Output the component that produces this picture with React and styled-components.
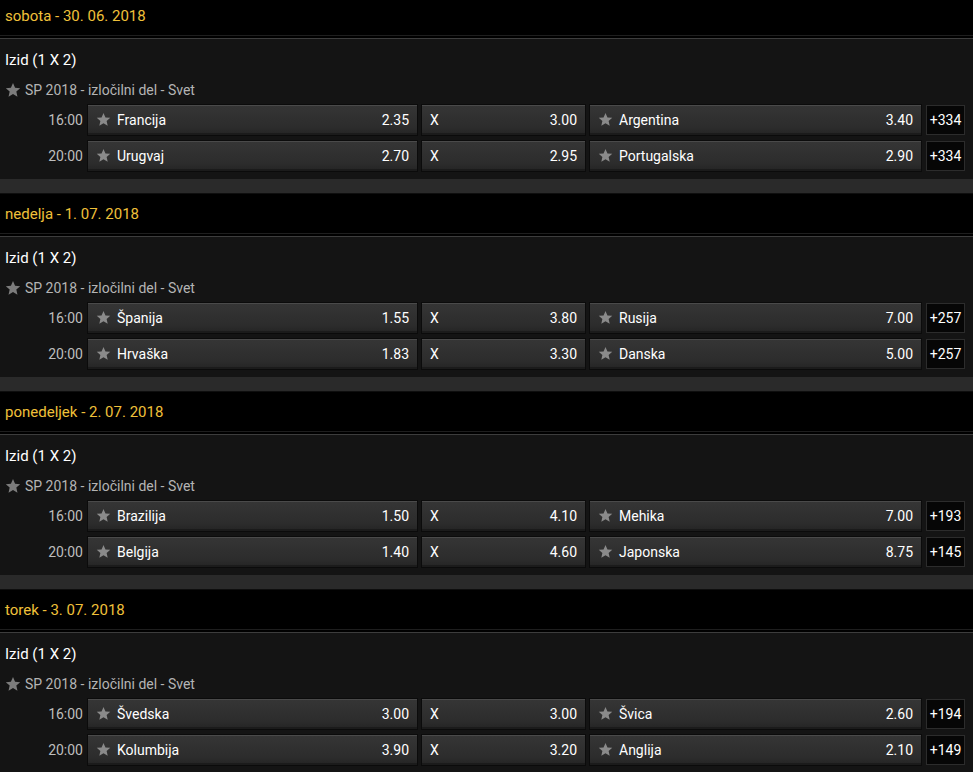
import React from 'react';
import styled, { createGlobalStyle } from 'styled-components';

const GlobalStyle = createGlobalStyle`
  html, body {
    margin: 0;
    padding: 0;
    background: #000;
    font-family: Roboto, "Liberation Sans", Arial, sans-serif;
    overflow: hidden;
  }
`;

const Page = styled.div`
  width: 973px;
  background: #000;
`;

const Section = styled.section`
  height: 198px;
  display: flex;
  flex-direction: column;
  background: #000;
`;

const DateHeader = styled.div`
  height: 35px;
  line-height: 33px;
  padding-left: 5px;
  color: #f0c03a;
  font-size: 15px;
  background: #000;
  border-bottom: 1px solid #1e1e1e;
  margin-bottom: 2px;
`;

const Body = styled.div`
  background: #141414;
  border-top: 1px solid #3d3d3d;
  padding: 11px 0 10px;
  display: flex;
  flex-direction: column;
`;

const MarketTitle = styled.div`
  height: 20px;
  line-height: 20px;
  padding-left: 5px;
  color: #fff;
  font-size: 15px;
  margin-bottom: 10px;
`;

const League = styled.div`
  height: 20px;
  line-height: 20px;
  padding-left: 5px;
  display: flex;
  align-items: center;
  gap: 4px;
  color: #b4b4b4;
  font-size: 14px;
  margin-bottom: 5px;
`;

const Rows = styled.div`
  display: flex;
  flex-direction: column;
  gap: 8px;
`;

const Row = styled.div`
  display: grid;
  grid-template-columns: 83px 329px 163px 331px 39px;
  column-gap: 5px;
  height: 28px;
`;

const Time = styled.div`
  color: #bdbdbd;
  font-size: 14px;
  text-align: right;
  line-height: 30px;
`;

const Outcome = styled.div`
  display: flex;
  align-items: center;
  padding: 0 8px;
  background: linear-gradient(#353535, #2c2c2c 80%, #262626);
  border-top: 1px solid #4a4a4a;
  border-bottom: 2px solid #1b1b1b;
  box-shadow: 0 0 0 1px #0b0b0b;
  color: #fff;
  font-size: 14px;
`;

const Name = styled.span`
  flex: 1;
  margin-left: ${p => (p.$withStar ? '6px' : '0')};
`;

const Odd = styled.span`
  color: #fff;
`;

const More = styled.div`
  background: #060606;
  border: 1px solid #2c2c2c;
  color: #fff;
  font-size: 14px;
  display: flex;
  align-items: center;
  justify-content: center;
`;

const Band = styled.div`
  height: 14px;
  background: #2a2a2a;
  border-bottom: 1px solid #0e0e0e;
`;

const Star = ({ size = 15, color = '#8a8a8a' }) => (
  <svg width={size} height={size} viewBox="0 0 24 24" style={{ flexShrink: 0 }}>
    <polygon
      points="12,1.5 15.1,8.6 22.8,9.3 17,14.4 18.7,22 12,18 5.3,22 7,14.4 1.2,9.3 8.9,8.6"
      fill={color}
    />
  </svg>
);

const days = [
  {
    date: 'sobota - 30. 06. 2018',
    games: [
      ['16:00', 'Francija', '2.35', '3.00', 'Argentina', '3.40', '+334'],
      ['20:00', 'Urugvaj', '2.70', '2.95', 'Portugalska', '2.90', '+334'],
    ],
  },
  {
    date: 'nedelja - 1. 07. 2018',
    games: [
      ['16:00', 'Španija', '1.55', '3.80', 'Rusija', '7.00', '+257'],
      ['20:00', 'Hrvaška', '1.83', '3.30', 'Danska', '5.00', '+257'],
    ],
  },
  {
    date: 'ponedeljek - 2. 07. 2018',
    games: [
      ['16:00', 'Brazilija', '1.50', '4.10', 'Mehika', '7.00', '+193'],
      ['20:00', 'Belgija', '1.40', '4.60', 'Japonska', '8.75', '+145'],
    ],
  },
  {
    date: 'torek - 3. 07. 2018',
    games: [
      ['16:00', 'Švedska', '3.00', '3.00', 'Švica', '2.60', '+194'],
      ['20:00', 'Kolumbija', '3.90', '3.20', 'Anglija', '2.10', '+149'],
    ],
  },
];

export default function App() {
  return (
    <Page>
      <GlobalStyle />
      {days.map(day => (
        <Section key={day.date}>
          <DateHeader>{day.date}</DateHeader>
          <Body>
            <MarketTitle>Izid (1 X 2)</MarketTitle>
            <League>
              <Star size={16} color="#7c7c7c" />
              SP 2018 - izločilni del - Svet
            </League>
            <Rows>
              {day.games.map(([time, home, o1, ox, away, o2, more]) => (
                <Row key={home}>
                  <Time>{time}</Time>
                  <Outcome>
                    <Star />
                    <Name $withStar>{home}</Name>
                    <Odd>{o1}</Odd>
                  </Outcome>
                  <Outcome>
                    <Name>X</Name>
                    <Odd>{ox}</Odd>
                  </Outcome>
                  <Outcome>
                    <Star />
                    <Name $withStar>{away}</Name>
                    <Odd>{o2}</Odd>
                  </Outcome>
                  <More>{more}</More>
                </Row>
              ))}
            </Rows>
          </Body>
          <Band />
        </Section>
      ))}
    </Page>
  );
}
